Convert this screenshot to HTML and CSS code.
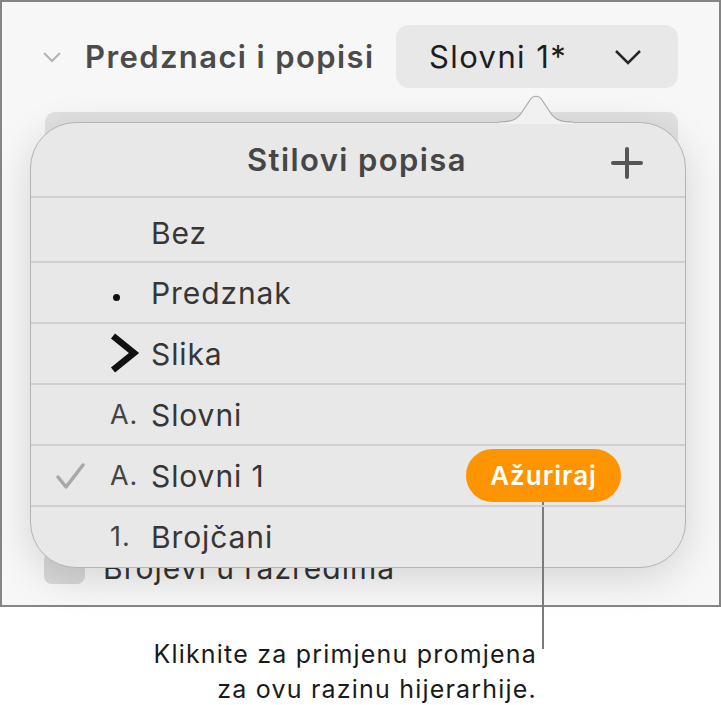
FILE: index.html
```html
<html>
<meta http-equiv="Content-Type" content="text/html; charset=utf-8" />

<head>
    <link rel="stylesheet" href="styles.css">
</head>

<body>

    <div id="panel">
        <div class="head">
            <svg class="disclose" width="20" height="12" viewBox="0 0 20 12"><path d="M2 2 L10 10 L18 2" /></svg>
            <span class="title">Predznaci i popisi</span>
            <div class="select">
                <span>Slovni 1*</span>
                <svg width="28" height="16" viewBox="0 0 28 16"><path d="M2 2 L14 14 L26 2" /></svg>
            </div>
        </div>
        <div class="field"></div>
        <div class="check-row">
            <span class="box"></span>
            <span>Brojevi u razredima</span>
        </div>

        <!-- popover sa stilovima popisa -->
        <div id="popover">
            <svg class="tip" width="74" height="30" viewBox="0 0 74 30">
                <path class="tip-fill" d="M0 28 C12 28 18 26 23 18 L31 6 C34 1 40 1 43 6 L51 18 C56 26 62 28 74 28 L74 30 L0 30 Z" />
                <path class="tip-line" d="M0 28 C12 28 18 26 23 18 L31 6 C34 1 40 1 43 6 L51 18 C56 26 62 28 74 28" />
            </svg>
            <div class="pop-head">
                <span>Stilovi popisa</span>
                <svg class="plus" width="32" height="32" viewBox="0 0 32 32"><path d="M16 2 V30 M2 16 H30" /></svg>
            </div>
            <div class="row first">
                <span class="tick"></span>
                <span class="mark"></span>
                <span class="label">Bez</span>
            </div>
            <div class="row">
                <span class="tick"></span>
                <span class="mark"><i class="dot"></i></span>
                <span class="label">Predznak</span>
            </div>
            <div class="row">
                <span class="tick"></span>
                <span class="mark"><svg width="30" height="44" viewBox="0 0 30 44"><path class="chev" d="M3 4 L24 21 L3 38" /></svg></span>
                <span class="label">Slika</span>
            </div>
            <div class="row">
                <span class="tick"></span>
                <span class="mark">A.</span>
                <span class="label">Slovni</span>
            </div>
            <div class="row">
                <span class="tick"><svg width="30" height="28" viewBox="0 0 30 28"><path d="M3 15 L11 25 L28 3" /></svg></span>
                <span class="mark">A.</span>
                <span class="label">Slovni 1</span>
                <span class="update">Ažuriraj</span>
            </div>
            <div class="row">
                <span class="tick"></span>
                <span class="mark">1.</span>
                <span class="label">Brojčani</span>
            </div>
        </div>
    </div>

    <p class="caption">Kliknite za primjenu promjena<br/>za ovu razinu hijerarhije.</p>

</body>

</html>
```

FILE: styles.css
```css
body,
div,
p {
    margin: 0px;
    padding: 0px;
}

body {
    background: #ffffff;
    font-family: Inter, "Noto Sans", sans-serif;
    color: #333333;
}

#panel {
    position: relative;
    width: 721px;
    height: 607px;
    box-sizing: border-box;
    border: 2px solid #858585;
    background: #f7f7f7;
}

.head {
    display: flex;
    align-items: center;
    padding: 23px 41px 0px 40px;
}

.disclose path {
    fill: none;
    stroke: #b3b3b3;
    stroke-width: 2;
}

.head .title {
    margin-left: 23px;
    font-size: 31px;
    font-weight: 600;
    letter-spacing: 1.4px;
    color: #4b4b4b;
}

.select {
    margin-left: auto;
    width: 282px;
    height: 63px;
    box-sizing: border-box;
    display: flex;
    align-items: center;
    justify-content: space-between;
    padding: 0px 36px 0px 33px;
    border-radius: 13px;
    background: #e8e8e8;
    font-size: 31px;
    letter-spacing: 1.4px;
    color: #1e1e1e;
}

.select path {
    fill: none;
    stroke: #262626;
    stroke-width: 2.5;
}

.field {
    margin: 24px 41px 0px 43px;
    height: 44px;
    border-radius: 10px;
    background: #e1e1e1;
}

.check-row {
    display: flex;
    align-items: center;
    margin: 394px 0px 0px 42px;
    font-size: 30px;
    letter-spacing: 1px;
    color: #333333;
}

.check-row .box {
    width: 41px;
    height: 32px;
    margin-right: 18px;
    border-radius: 8px;
    background: #d8d8d8;
}

#popover {
    position: absolute;
    left: 28px;
    top: 120px;
    width: 656px;
    height: 446px;
    box-sizing: border-box;
    border: 1px solid #b4b4b4;
    border-radius: 46px;
    background: #e8e8e8;
    box-shadow: 0px 10px 40px rgba(0, 0, 0, 0.14);
}

#popover .tip {
    position: absolute;
    left: 468px;
    top: -29px;
}

.tip-fill {
    fill: #f1f1f1;
}

.tip-line {
    fill: none;
    stroke: #a9a9a9;
    stroke-width: 1.2;
}

.pop-head {
    position: relative;
    height: 73px;
    display: flex;
    align-items: center;
    justify-content: center;
    padding-right: 2px;
    font-size: 31px;
    font-weight: 600;
    letter-spacing: 1.4px;
    color: #464646;
}

.pop-head .plus {
    position: absolute;
    right: 42px;
    top: 24px;
}

.plus path {
    fill: none;
    stroke: #555555;
    stroke-width: 4;
    stroke-linecap: round;
}

.row {
    position: relative;
    height: 61px;
    box-sizing: border-box;
    border-top: 2px solid #d0d0d0;
    display: flex;
    align-items: center;
    padding-left: 24px;
    font-size: 30px;
    letter-spacing: 0.9px;
    color: #363636;
}

.row.first {
    height: 65px;
    padding-top: 6px;
}

.row .tick {
    width: 30px;
    margin-right: 25px;
    display: flex;
}

.tick path {
    fill: none;
    stroke: #a8a8a8;
    stroke-width: 3.5;
    stroke-linecap: round;
    stroke-linejoin: round;
}

.row .mark {
    width: 41px;
    display: flex;
    align-items: center;
    font-size: 27px;
    color: #444444;
}

.dot {
    display: block;
    width: 7px;
    height: 7px;
    margin: 10px 0px 0px 3px;
    border-radius: 50%;
    background: #111111;
}

.chev {
    fill: none;
    stroke: #111111;
    stroke-width: 6.5;
}

.row .label {
    flex: 1;
}

.update {
    position: relative;
    width: 155px;
    height: 53px;
    margin-right: 64px;
    border-radius: 27px;
    background: #fe9500;
    color: #ffffff;
    font-size: 26px;
    font-weight: 600;
    letter-spacing: 1px;
    display: flex;
    align-items: center;
    justify-content: center;
}

/* linija do opisa ispod */
.update:after {
    content: "";
    position: absolute;
    left: 76px;
    top: 53px;
    width: 2px;
    height: 147px;
    background: #7b7b7b;
}

.caption {
    margin-top: 30px;
    padding-right: 184px;
    text-align: right;
    font-size: 25px;
    letter-spacing: 1.2px;
    line-height: 35px;
    color: #1a1a1a;
}
```
